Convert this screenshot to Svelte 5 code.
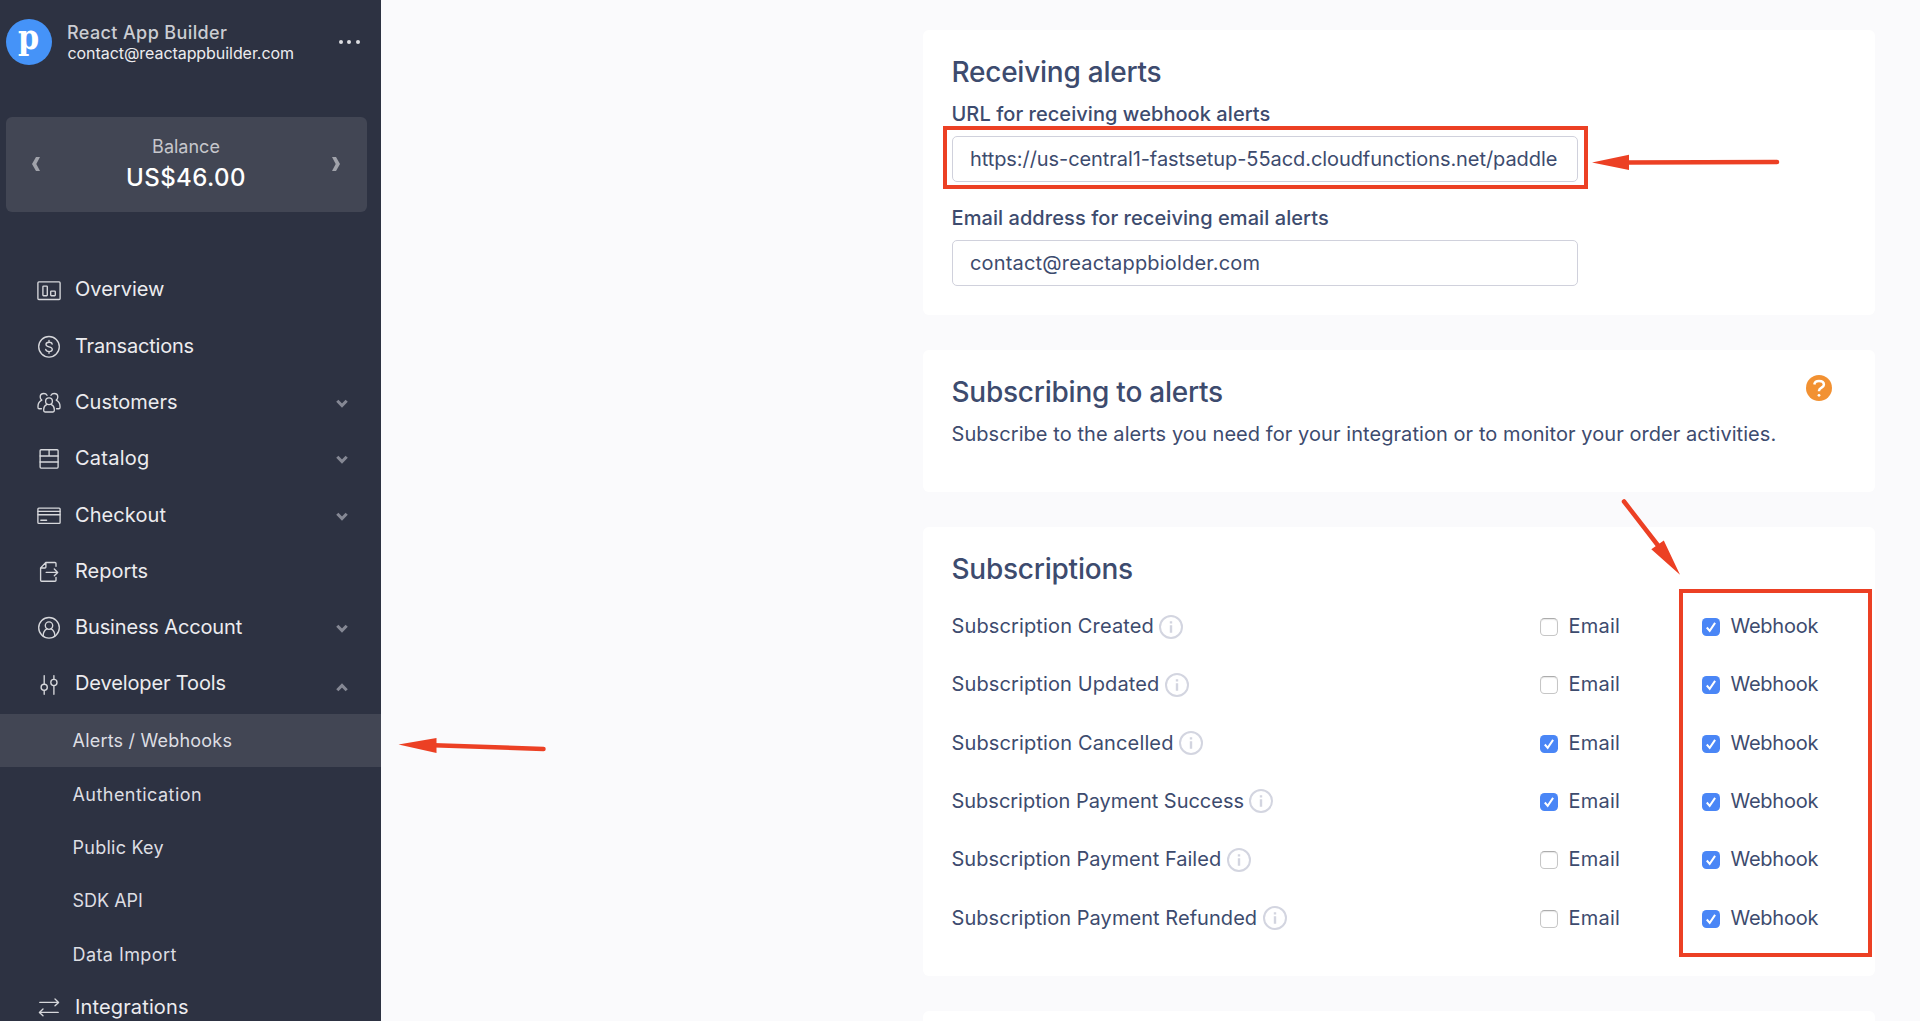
<script>
  const menu = [
    { id: 'overview', label: 'Overview', ls: 0 },
    { id: 'transactions', label: 'Transactions', ls: -0.2 },
    { id: 'customers', label: 'Customers', ls: 0, arrow: 'down' },
    { id: 'catalog', label: 'Catalog', ls: 0.24, arrow: 'down' },
    { id: 'checkout', label: 'Checkout', ls: 0.08, arrow: 'down' },
    { id: 'reports', label: 'Reports', ls: -0.02 },
    { id: 'account', label: 'Business Account', ls: -0.14, arrow: 'down' },
    {
      id: 'tools', label: 'Developer Tools', ls: -0.13, arrow: 'up',
      children: [
        { label: 'Alerts / Webhooks', ls: 0.21, active: true },
        { label: 'Authentication', ls: 0.45 },
        { label: 'Public Key', ls: 0.25 },
        { label: 'SDK API', ls: 0 },
        { label: 'Data Import', ls: 0.43 }
      ]
    },
    { id: 'integrations', label: 'Integrations', ls: 0.14 }
  ];

  const alerts = [
    { label: 'Subscription Created', ls: 0.13, email: false, webhook: true },
    { label: 'Subscription Updated', ls: 0.12, email: false, webhook: true },
    { label: 'Subscription Cancelled', ls: 0.14, email: true, webhook: true },
    { label: 'Subscription Payment Success', ls: -0.02, email: true, webhook: true },
    { label: 'Subscription Payment Failed', ls: 0.03, email: false, webhook: true },
    { label: 'Subscription Payment Refunded', ls: 0.05, email: false, webhook: true }
  ];
</script>

{#snippet icon(id)}
  <svg class="icon" viewBox="0 0 24 24" aria-hidden="true">
    {#if id === 'overview'}
      <rect x="0.9" y="2.9" width="22.2" height="17.6" rx="1" />
      <rect x="5.9" y="7.1" width="4.4" height="9.6" rx="0.6" />
      <rect x="13.7" y="12.1" width="4.6" height="4.6" rx="0.6" />
    {:else if id === 'transactions'}
      <circle cx="12" cy="11.8" r="10.3" />
      <path d="M15.2 9.1c-.3-1.2-1.500-1.900-3.100-1.900-1.800 0-3.100.8-3.100 2.200 0 3.200 6.300 1.600 6.300 4.900 0 1.400-1.400 2.300-3.200 2.300s-3.100-.9-3.400-2.200M12 5.500v1.700M12 16.600v1.700" />
    {:else if id === 'customers'}
      <circle cx="12" cy="10.2" r="3.4" />
      <path d="M9.900 13.400c-2 .9-3.200 2.600-3.200 4.900v1.300c0 .9.500 1.400 1.300 1.400h8c.8 0 1.300-.5 1.300-1.400v-1.300c0-2.300-1.200-4-3.200-4.900" />
      <path d="M10 4.300C9.400 3.200 8.300 2.500 6.900 2.500c-2.200 0-3.700 1.500-3.700 3.500 0 1.300.6 2.400 1.600 3.100C2.400 10.200 1 12.400 1 15.200v1.300c0 .8.500 1.200 1.200 1.200h2.200" />
      <path d="M14 4.300c.6-1.100 1.700-1.800 3.100-1.800 2.200 0 3.700 1.500 3.700 3.500 0 1.300-.6 2.400-1.600 3.100 2.400 1.100 3.800 3.300 3.800 6.100v1.300c0 .8-.5 1.200-1.200 1.200h-2.200" />
    {:else if id === 'catalog'}
      <rect x="3.1" y="2.7" width="18" height="18.4" rx="1" />
      <path d="M3.100 9h18M3.100 15h18M12.100 2.700V9" />
    {:else if id === 'checkout'}
      <rect x="0.9" y="4.1" width="22.2" height="15.3" rx="1" />
      <path d="M1 7.400h22M1 10.700h22M3.800 16.300h5.800" />
    {:else if id === 'reports'}
      <path d="M19 6.300V3.500c0-.6-.4-1-1-1H8.800L3.600 7.900v12.300c0 .6.400 1 1 1H18c.6 0 1-.4 1-1v-2.700M8.900 2.700v4.300c0 .6-.4 1-1 1H3.700M9.200 12.400h11.300M17.300 9l3.400 3.400-3.400 3.400" />
    {:else if id === 'account'}
      <circle cx="12" cy="11.8" r="10.3" />
      <circle cx="12" cy="9.6" r="3.7" />
      <path d="M6.100 19.900c.1-3.300 1.400-5.700 3.800-7M17.900 19.900c-.1-3.300-1.400-5.700-3.800-7" />
    {:else if id === 'tools'}
      <circle cx="7.2" cy="14.300" r="3.1" />
      <circle cx="16.900" cy="9.500" r="3.1" />
      <path d="M7.200 2.600v8.600M7.200 17.400v3.800M16.900 2.600v3.800M16.900 12.600v8.600" />
    {:else if id === 'integrations'}
      <path d="M2.800 6.400h18.600M18 3l3.600 3.400L18 9.800M21.200 16.400H2.400M6 13l-3.600 3.400L6 19.800" />
    {/if}
  </svg>
{/snippet}

{#snippet check(label, on)}
  <label class="option">
    <span class="box" class:on>
      {#if on}
        <svg viewBox="0 0 18 18"><path d="M4.800 9.500l2.900 3.400 5.400-8" /></svg>
      {/if}
    </span>
    <span class={label === 'Email' ? 'email' : 'webhook'}>{label}</span>
  </label>
{/snippet}

<div class="page">
  <aside>
    <header>
      <div class="logo"><span>p</span></div>
      <div class="who">
        <strong>React App Builder</strong>
        <span>contact@reactappbuilder.com</span>
      </div>
      <div class="dots"><i></i><i></i><i></i></div>
    </header>

    <section class="balance">
      <svg viewBox="0 0 8 14"><path d="M4 0H8L4.300 7 8 14H4L0 7z" /></svg>
      <div>
        <span>Balance</span>
        <b>US$46.00</b>
      </div>
      <svg viewBox="0 0 8 14"><path d="M4 0H0l3.700 7L0 14h4l4-7z" /></svg>
    </section>

    <nav>
      {#each menu as item}
        <div class="item">
          {@render icon(item.id)}
          <span style:letter-spacing="{item.ls}px">{item.label}</span>
          {#if item.arrow}
            <svg class="chev {item.arrow}" viewBox="0 0 12 9"><path d="M1.300 1.700L6 6.500l4.700-4.800" /></svg>
          {/if}
        </div>
        {#if item.children}
          <div class="sub">
            {#each item.children as child}
              <div class="subitem" class:active={child.active}>
                <span style:letter-spacing="{child.ls}px">{child.label}</span>
              </div>
            {/each}
          </div>
        {/if}
      {/each}
    </nav>
  </aside>

  <main>
    <section class="card receiving">
      <h2>Receiving alerts</h2>
      <div class="label url-label">URL for receiving webhook alerts</div>
      <div class="field url">
        https://us-central1-fastsetup-55acd.cloudfunctions.net/paddle
        <div class="mark mark-url"></div>
      </div>
      <div class="label mail-label">Email address for receiving email alerts</div>
      <div class="field mail">contact@reactappbiolder.com</div>
    </section>

    <section class="card subscribing">
      <div class="text">
        <h2>Subscribing to alerts</h2>
        <p>Subscribe to the alerts you need for your integration or to monitor your order activities.</p>
      </div>
      <svg class="help" viewBox="0 0 26 26">
        <circle cx="13" cy="13" r="13" />
        <path d="M8.300 9.500c.4-2.200 2.300-3.400 4.700-3.400 2.900 0 4.900 1.500 4.900 3.700 0 3-4.900 2.500-4.900 5.900v.6" />
        <circle class="dot" cx="13" cy="20.300" r="1.400" />
      </svg>
    </section>

    <section class="card subscriptions">
      <h2>Subscriptions</h2>
      <div class="rows">
        {#each alerts as row}
          <div class="row">
            <div class="name">
              <span style:letter-spacing="{row.ls}px">{row.label}</span>
              <svg viewBox="0 0 24 24">
                <circle cx="12" cy="12" r="11" />
                <path d="M12 10.300v7.500M12 6.200v2.300" />
              </svg>
            </div>
            {@render check('Email', row.email)}
            {@render check('Webhook', row.webhook)}
          </div>
        {/each}
      </div>
      <div class="mark mark-hooks"></div>
    </section>

    <section class="card next"></section>
  </main>

  <svg class="arrows" viewBox="0 0 1920 1021" aria-hidden="true">
    <path class="line" d="M1627 162.500L1777 162M434 745.300L543.500 749M1624 501.500L1660 548" />
    <path class="head" d="M1592 162.500L1629 154.800V170zM398.500 744.500L436.500 738v15zM1680 574.800L1651.300 549.200 1663.800 540.600z" />
  </svg>
</div>

<style>
  :global(body) { margin: 0; background: #fafafc; overflow: hidden; }
  .page {
    position: relative;
    display: flex;
    width: 1920px;
    height: 1021px;
    overflow: hidden;
    background: #fafafc;
    font-family: Inter, "Liberation Sans", sans-serif;
    color: #3d4b6e;
  }

  aside {
    flex: none;
    box-sizing: border-box;
    width: 381px;
    height: 1021px;
    padding-top: 18.5px;
    overflow: hidden;
    background: #2d3242;
    color: #ececef;
  }
  header { display: flex; align-items: flex-start; height: 98.5px; padding-left: 6px; }
  .logo {
    flex: none;
    display: flex;
    justify-content: center;
    width: 46px;
    height: 46px;
    border-radius: 50%;
    background: #4593f8;
  }
  .logo span {
    font: bold 36px/36px "DejaVu Serif", serif;
    color: #fff;
    transform: scaleX(0.84);
    margin-top: -0.5px;
  }
  .who { display: flex; flex-direction: column; width: 272px; margin-left: 15px; padding-top: 3px; white-space: nowrap; }
  .who strong { font-size: 18px; line-height: 22px; font-weight: 500; letter-spacing: 0.38px; color: #cbcdd3; }
  .who span { margin: -1px 0 0 0.5px; font-size: 16px; line-height: 20px; letter-spacing: -0.06px; }
  .dots { display: flex; gap: 4.4px; margin-top: 21px; }
  .dots i { width: 4px; height: 4px; border-radius: 50%; background: #dcdde1; }

  .balance {
    display: flex;
    justify-content: space-between;
    align-items: center;
    box-sizing: border-box;
    width: 361px;
    height: 95px;
    margin-left: 6px;
    padding: 0 27px 0 26px;
    border-radius: 6px;
    background: #424654;
  }
  .balance svg { width: 8px; height: 14px; margin-top: -2px; fill: #a0a2aa; }
  .balance div { display: flex; flex-direction: column; align-items: center; }
  .balance span { margin-top: -1px; font-size: 18px; line-height: 24px; color: #c6c7cc; }
  .balance b { margin-top: 4px; font-size: 24px; line-height: 30px; font-weight: 500; letter-spacing: 0.43px; color: #fff; }

  nav { padding-top: 48.9px; }
  .item { display: flex; align-items: center; height: 56.3px; padding: 0 33px 0 37px; font-size: 20px; line-height: 28px; }
  .item span { flex: 1; margin: 0.6px 0 0 14px; white-space: nowrap; }
  .icon {
    width: 24px;
    height: 24px;
    margin-top: 3px;
    fill: none;
    stroke: #d6d7db;
    stroke-width: 1.35;
    stroke-linecap: round;
    stroke-linejoin: round;
  }
  .chev { width: 12px; height: 9px; margin-top: 4px; fill: none; stroke: #858894; stroke-width: 3; }
  .chev.up { margin-top: 8px; transform: rotate(180deg); }
  .sub { margin: 2.5px 0 -2.5px; }
  .subitem { display: flex; align-items: center; height: 53.4px; padding-left: 72.5px; font-size: 18px; color: #dddee3; }
  .subitem span { margin-top: 0.6px; }
  .active { background: #424654; }

  main { flex: none; width: 952.5px; margin-left: 541.5px; padding-top: 30px; }
  .card { position: relative; box-sizing: border-box; padding: 25.4px 0 0 29px; border-radius: 6px; background: #fff; }
  h2 { margin: 0; font-size: 28px; line-height: 34px; font-weight: 500; letter-spacing: -0.24px; white-space: nowrap; }
  .label { font-size: 20px; line-height: 26px; font-weight: 500; white-space: nowrap; }
  .url-label { margin-top: 11.6px; letter-spacing: 0.057px; }
  .mail-label { margin-top: 23.3px; letter-spacing: 0.07px; }
  .field {
    position: relative;
    box-sizing: border-box;
    width: 626px;
    height: 46px;
    margin-top: 9px;
    padding-left: 17.5px;
    border: 1.5px solid #d0d1dc;
    border-radius: 5px;
    font-size: 20px;
    line-height: 44px;
    white-space: nowrap;
  }
  .mail { margin-top: 8.7px; letter-spacing: 0.18px; }
  .url { letter-spacing: -0.075px; }
  .receiving { height: 285px; }

  .subscribing { display: flex; justify-content: space-between; height: 142.8px; margin-top: 34.5px; padding-right: 43px; }
  .subscribing p { margin: 12px 0 0; font-size: 20px; line-height: 26px; letter-spacing: 0.067px; white-space: nowrap; }
  .help { flex: none; width: 26px; height: 26px; margin-top: 0.6px; fill: #f29132; }
  .help path { fill: none; stroke: #fff; stroke-width: 2.5; }
  .help .dot { fill: #fff; }

  .subscriptions { height: 449px; margin-top: 34.7px; }
  .rows { margin-top: 10.5px; }
  .row { display: flex; align-items: center; height: 58.3px; font-size: 20px; line-height: 28px; }
  .name { display: flex; align-items: center; width: 588.5px; white-space: nowrap; }
  .name svg { width: 24px; height: 24px; margin: 1px 0 0 5.5px; fill: none; stroke: #d3d5e0; stroke-width: 2; }
  .name path { stroke-width: 2.4; }
  .option { display: flex; align-items: center; width: 162px; }
  .box {
    box-sizing: border-box;
    width: 18px;
    height: 18px;
    margin: 2px 10.5px 0 0;
    border: 1px solid #c6c6c6;
    border-top-color: #acacac;
    border-radius: 4.5px;
    background: #fff;
    box-shadow: inset 0 1px 1px #e8e8e8;
  }
  .box.on { border: 0; background: #4a86f6; box-shadow: none; }
  .box svg { display: block; width: 18px; height: 18px; fill: none; stroke: #fff; stroke-width: 2; }
  .email { letter-spacing: 0.22px; }
  .webhook { letter-spacing: -0.25px; }

  .next { height: 60px; margin-top: 35px; }

  /* Red annotations laid over the page */
  .mark { position: absolute; box-sizing: border-box; border: 4px solid #ec4024; pointer-events: none; }
  .mark-url { top: -11px; left: -10px; width: 645px; height: 63px; }
  .mark-hooks { top: 62px; left: 756px; width: 193px; height: 368px; }
  .arrows { position: absolute; inset: 0; width: 1920px; height: 1021px; pointer-events: none; }
  .line { fill: none; stroke: #ec4024; stroke-width: 4.5; stroke-linecap: round; }
  .head { fill: #ec4024; }
</style>
